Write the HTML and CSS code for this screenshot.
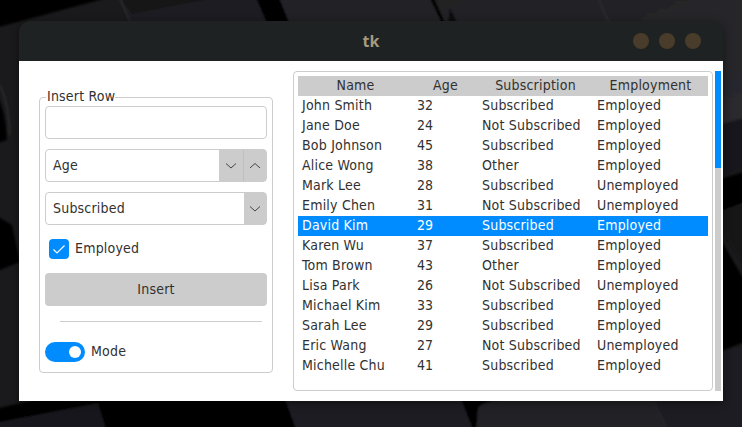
FILE: index.html
```html
<!DOCTYPE html>
<html lang="en">
<head>
<meta charset="utf-8">
<title>tk</title>
<link rel="stylesheet" href="styles.css">
</head>
<body>
<svg class="wallpaper" viewBox="0 0 742 427" aria-hidden="true">
  <defs>
    <filter id="soft" x="-5%" y="-5%" width="110%" height="110%"><feGaussianBlur stdDeviation="1.2"/></filter>
    <linearGradient id="key" x1="0" y1="0" x2="1" y2="1"><stop offset="0" stop-color="#212124"/><stop offset="1" stop-color="#2a2a2f"/></linearGradient>
  </defs>
  <rect width="742" height="427" fill="#1a1a1c"/>
  <g filter="url(#soft)">
    <path d="M-5-5H118L-5 28z" fill="#000"/>
    <path d="M118-5H255L268 25H130z" fill="#1e1e21"/>
    <path d="M118-5H230L132 14z" fill="#161618"/>
    <path d="M118-5L131 24" stroke="#343438" fill="none"/>
    <path d="M255-5H280L294 30H270z" fill="#000"/>
    <path d="M278-5H430L444 30H292z" fill="#232327"/>
    <path d="M430-5L445 26" stroke="#000" stroke-width="3" fill="none"/>
    <path d="M434-5H750V125H718V30H448z" fill="url(#key)"/>
    <path d="M450 8L458 25H448z" fill="#09090a"/>
    <path d="M597-3L610 24" stroke="#34343a" fill="none"/>
    <path d="M0 85Q9 105 10 135" stroke="#38383b" fill="none"/>
    <path d="M-5 90Q6 110 7 140L-5 144z" fill="#050505"/>
    <path d="M-5 215L12 225L20 262L-5 272z" fill="#040404"/>
    <path d="M718 125L750 116V165L718 180z" fill="#19191b"/>
    <path d="M718 180L750 170V205L718 212z" fill="#000"/>
    <path d="M718 212L750 200V275L728 240z" fill="#161618"/>
    <path d="M718 235L750 290V340L718 352z" fill="#040405"/>
    <path d="M-5 409L60 394H750V440H-5z" fill="#000"/>
    <path d="M-5 423L98 403L107 432H-5z" fill="#18181a"/>
    <path d="M284 396H460L474 432H297z" fill="#1f1f22"/>
    <path d="M476 432L478 409Q480 402 500 400H655L668 432z" fill="#222225"/>
    <path d="M652 398H722V352L750 344V432H668z" fill="#1f1f22"/>
    <path d="M654 402L668 430" stroke="#303035" fill="none"/>
  </g>
</svg>
<main class="window">
  <header class="titlebar">
    <h1 class="title">tk</h1>
    <div class="controls"><i></i><i></i><i></i></div>
  </header>
  <div class="content">
    <section class="form">
      <h2 class="legend">Insert Row</h2>
      <div class="field"></div>
      <div class="field"><span>Age</span>
        <b class="arrow"><svg viewBox="0 0 12 8"><path d="M1 1.5L6 6L11 1.5"/></svg></b>
        <b class="arrow up"><svg viewBox="0 0 12 8"><path d="M1 6L6 1.5L11 6"/></svg></b>
      </div>
      <div class="field"><span>Subscribed</span>
        <b class="arrow combo"><svg viewBox="0 0 12 8"><path d="M1 1.5L6 6L11 1.5"/></svg></b>
      </div>
      <div class="check"><svg viewBox="0 0 20 20"><path d="M4.5 10.5L8 14L15.5 6.5"/></svg><span>Employed</span></div>
      <button class="insert">Insert</button>
      <hr class="separator">
      <div class="mode"><i class="switch"></i><span>Mode</span></div>
    </section>
    <section class="tree">
      <table>
        <colgroup><col class="wide"><col class="narrow"><col class="wide"><col class="wide"></colgroup>
        <thead><tr><th>Name</th><th>Age</th><th>Subscription</th><th>Employment</th></tr></thead>
        <tbody>
          <tr><td>John Smith</td><td>32</td><td>Subscribed</td><td>Employed</td></tr>
          <tr><td>Jane Doe</td><td>24</td><td>Not Subscribed</td><td>Employed</td></tr>
          <tr><td>Bob Johnson</td><td>45</td><td>Subscribed</td><td>Employed</td></tr>
          <tr><td>Alice Wong</td><td>38</td><td>Other</td><td>Employed</td></tr>
          <tr><td>Mark Lee</td><td>28</td><td>Subscribed</td><td>Unemployed</td></tr>
          <tr><td>Emily Chen</td><td>31</td><td>Not Subscribed</td><td>Unemployed</td></tr>
          <tr class="selected"><td>David Kim</td><td>29</td><td>Subscribed</td><td>Employed</td></tr>
          <tr><td>Karen Wu</td><td>37</td><td>Subscribed</td><td>Employed</td></tr>
          <tr><td>Tom Brown</td><td>43</td><td>Other</td><td>Employed</td></tr>
          <tr><td>Lisa Park</td><td>26</td><td>Not Subscribed</td><td>Unemployed</td></tr>
          <tr><td>Michael Kim</td><td>33</td><td>Subscribed</td><td>Employed</td></tr>
          <tr><td>Sarah Lee</td><td>29</td><td>Subscribed</td><td>Employed</td></tr>
          <tr><td>Eric Wang</td><td>27</td><td>Not Subscribed</td><td>Unemployed</td></tr>
          <tr><td>Michelle Chu</td><td>41</td><td>Subscribed</td><td>Employed</td></tr>
        </tbody>
      </table>
    </section>
    <div class="scrollbar"><div class="thumb"></div></div>
  </div>
</main>
</body>
</html>
```

FILE: styles.css
```css
* { box-sizing: border-box; }
body {
  margin: 0;
  width: 742px;
  height: 427px;
  padding: 21px 19px 26px;
  overflow: hidden;
  background: #1b1b1e;
  color: #313131;
  font: 14px/18px "DejaVu Sans Condensed", "DejaVu Sans", sans-serif;
  font-stretch: condensed;
  letter-spacing: .2px;
}
.wallpaper { position: absolute; left: 0; top: 0; width: 742px; height: 427px; }
.window {
  position: relative;
  width: 704px;
  height: 380px;
  background: linear-gradient(#1e2222 40px, #fff 40px);
  border-radius: 12px 12px 0 0;
  overflow: hidden;
  box-shadow: 0 2px 10px rgba(0, 0, 0, .45);
}
.titlebar {
  display: grid;
  grid-template-columns: 1fr auto 1fr;
  align-items: center;
  height: 40px;
  padding-right: 22px;
  padding-left: 22px;
}
.title {
  grid-column: 2;
  margin: 0;
  color: #a6997f;
  font: bold 16px/20px "Noto Sans", sans-serif;
  letter-spacing: 0;
}
.controls { display: flex; gap: 10px; justify-self: end; }
.controls i { width: 16px; height: 16px; border-radius: 50%; background: #4a3c2a; }
.content { display: flex; height: 340px; padding: 10px 2px 10px 20px; }
.form {
  width: 234px;
  height: 276px;
  margin: 26px 20px 0 0;
  padding: 0 5px;
  border: 1px solid #ccc;
  border-radius: 4px;
}
.legend {
  width: max-content;
  height: 19px;
  margin: -11px 0 0 1px;
  padding: 0 0 0 1px;
  background: #fff;
  font-size: inherit;
  font-weight: normal;
}
.field {
  display: flex;
  align-items: center;
  height: 33px;
  margin-bottom: 10px;
  padding-left: 7px;
  border: 1px solid #ccc;
  border-radius: 4px;
}
.field span { flex: 1; padding-bottom: 2px; }
.arrow {
  display: grid;
  place-items: center;
  width: 24px;
  height: 31px;
  background: #ccc;
}
.arrow.up { border-left: 1px solid #bfbfbf; width: 23px; }
.arrow.combo { width: 22px; }
.arrow svg { width: 12px; height: 8px; fill: none; stroke: #444; stroke-width: 1; }
.check { display: flex; gap: 6px; height: 20px; margin: 14px 0 14px 4px; }
.check svg { width: 20px; height: 20px; border-radius: 4px; background: #008cff; fill: none; stroke: #fff; stroke-width: 1.2; }
.insert {
  display: block;
  width: 100%;
  height: 33px;
  padding: 0 0 2px;
  border: 0;
  border-radius: 4px;
  background: #ccc;
  color: inherit;
  font: inherit;
  letter-spacing: inherit;
}
.separator { height: 1px; margin: 15px 5px 20px 15px; border: 0; background: #ccc; }
.mode { display: flex; gap: 6px; }
.switch {
  width: 40px;
  height: 20px;
  padding: 4px;
  border-radius: 10px;
  background: #008cff;
}
.switch::after { content: ""; display: block; width: 12px; height: 12px; margin-left: auto; border-radius: 50%; background: #fff; }
.tree { width: 420px; height: 320px; padding: 4px; border: 1px solid #ccc; border-radius: 4px; }
table { width: 410px; table-layout: fixed; border-collapse: collapse; }
.wide { width: 115px; }
.narrow { width: 65px; }
tr { height: 20px; }
th, td { padding: 0 4px 2px; text-align: left; white-space: nowrap; line-height: 18px; }
td:nth-child(2) { letter-spacing: 0; }
th { padding: 0 0 2px; background: #ccc; font-weight: normal; text-align: center; }
.selected td { background: #008cff; color: #fff; }
.scrollbar { width: 6px; height: 320px; margin-left: 2px; background: #ccc; }
.thumb { height: 97px; background: #008cff; }
```
